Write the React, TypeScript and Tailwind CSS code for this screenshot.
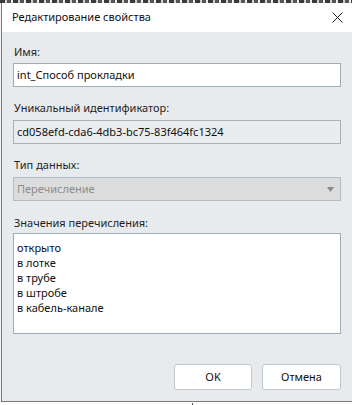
import React from "react";

const font = { fontFamily: '"Noto Sans", "Open Sans", sans-serif' };

function Label({ children, className }: { children: React.ReactNode; className?: string }) {
  return (
    <div className={`h-[16px] leading-[16px] text-[11px] text-[#1e1e1e] pl-[1px] ${className ?? ""}`}>{children}</div>
  );
}

export default function App() {
  const items = ["открыто", "в лотке", "в трубе", "в штробе", "в кабель-канале"];
  return (
    <div className="w-[352px] h-[405px] bg-white overflow-hidden flex flex-col" style={font}>
      <div className="h-[3px] shrink-0 bg-[repeating-linear-gradient(90deg,#3a3a3a_0px,#3a3a3a_5px,#d0d0d0_5px,#d0d0d0_7px,#555_7px,#555_11px,#eee_11px,#eee_13px)]" />
      <div className="flex shrink-0">
        <div className="w-[1px] bg-[#f4f4f4]" />
        <div className="flex-1 flex flex-col border-l border-b border-[#7a7a7a]">
          <div className="h-[29px] bg-white flex items-center justify-between pl-[10px] pr-[9px]">
            <span className="text-[11px] text-[#111]">Редактирование свойства</span>
            <svg width="11" height="11" viewBox="0 0 11 11">
              <path d="M0.5 0.5 L10.5 10.5 M10.5 0.5 L0.5 10.5" stroke="#222" strokeWidth="1" />
            </svg>
          </div>
          <div className="bg-[#e8ebee] h-[369px] flex flex-col px-[11px]">
            <Label className="mt-[12px]">Имя:</Label>
            <div className="mt-[3px] h-[24px] border border-[#a3abb4] bg-white flex items-center px-[3px] text-[11px] text-[#111]">
              int_Способ прокладки
            </div>
            <Label className="mt-[13px]">Уникальный идентификатор:</Label>
            <div className="mt-[4px] h-[24px] border border-[#a9b0b8] bg-[#eaecef] flex items-center px-[3px] text-[11px] text-[#111]">
              cd058efd-cda6-4db3-bc75-83f464fc1324
            </div>
            <Label className="mt-[13px]">Тип данных:</Label>
            <div className="mt-[4px] h-[24px] border border-[#b3bbc3] bg-[#dcdcdc] flex items-center justify-between px-[3px] text-[11px] text-[#8c8c8c]">
              <span>Перечисление</span>
              <svg width="7" height="5" viewBox="0 0 7 5" className="mr-[3px]">
                <path d="M0 0 H7 L3.5 5 Z" fill="#8a8a8a" />
              </svg>
            </div>
            <Label className="mt-[14px]">Значения перечисления:</Label>
            <div className="mt-[2px] h-[101px] border border-[#a3abb4] bg-white pt-[6px] px-[3px] text-[11px] text-[#111]">
              {items.map((t) => (
                <div key={t} className="h-[15px] leading-[15px]">{t}</div>
              ))}
            </div>
            <div className="mt-[30px] flex justify-end gap-[10px]">
              <button className="w-[78px] h-[26px] rounded-[3px] border border-[#c4c8cc] bg-white text-[11px] text-[#111]">OK</button>
              <button className="w-[79px] h-[26px] rounded-[3px] border border-[#c4c8cc] bg-white text-[11px] text-[#111]">Отмена</button>
            </div>
          </div>
        </div>
      </div>
      <div className="flex-1 relative">
        <div className="absolute left-[192px] top-[1px] w-[1px] h-[4px] bg-[#555]" />
      </div>
    </div>
  );
}
